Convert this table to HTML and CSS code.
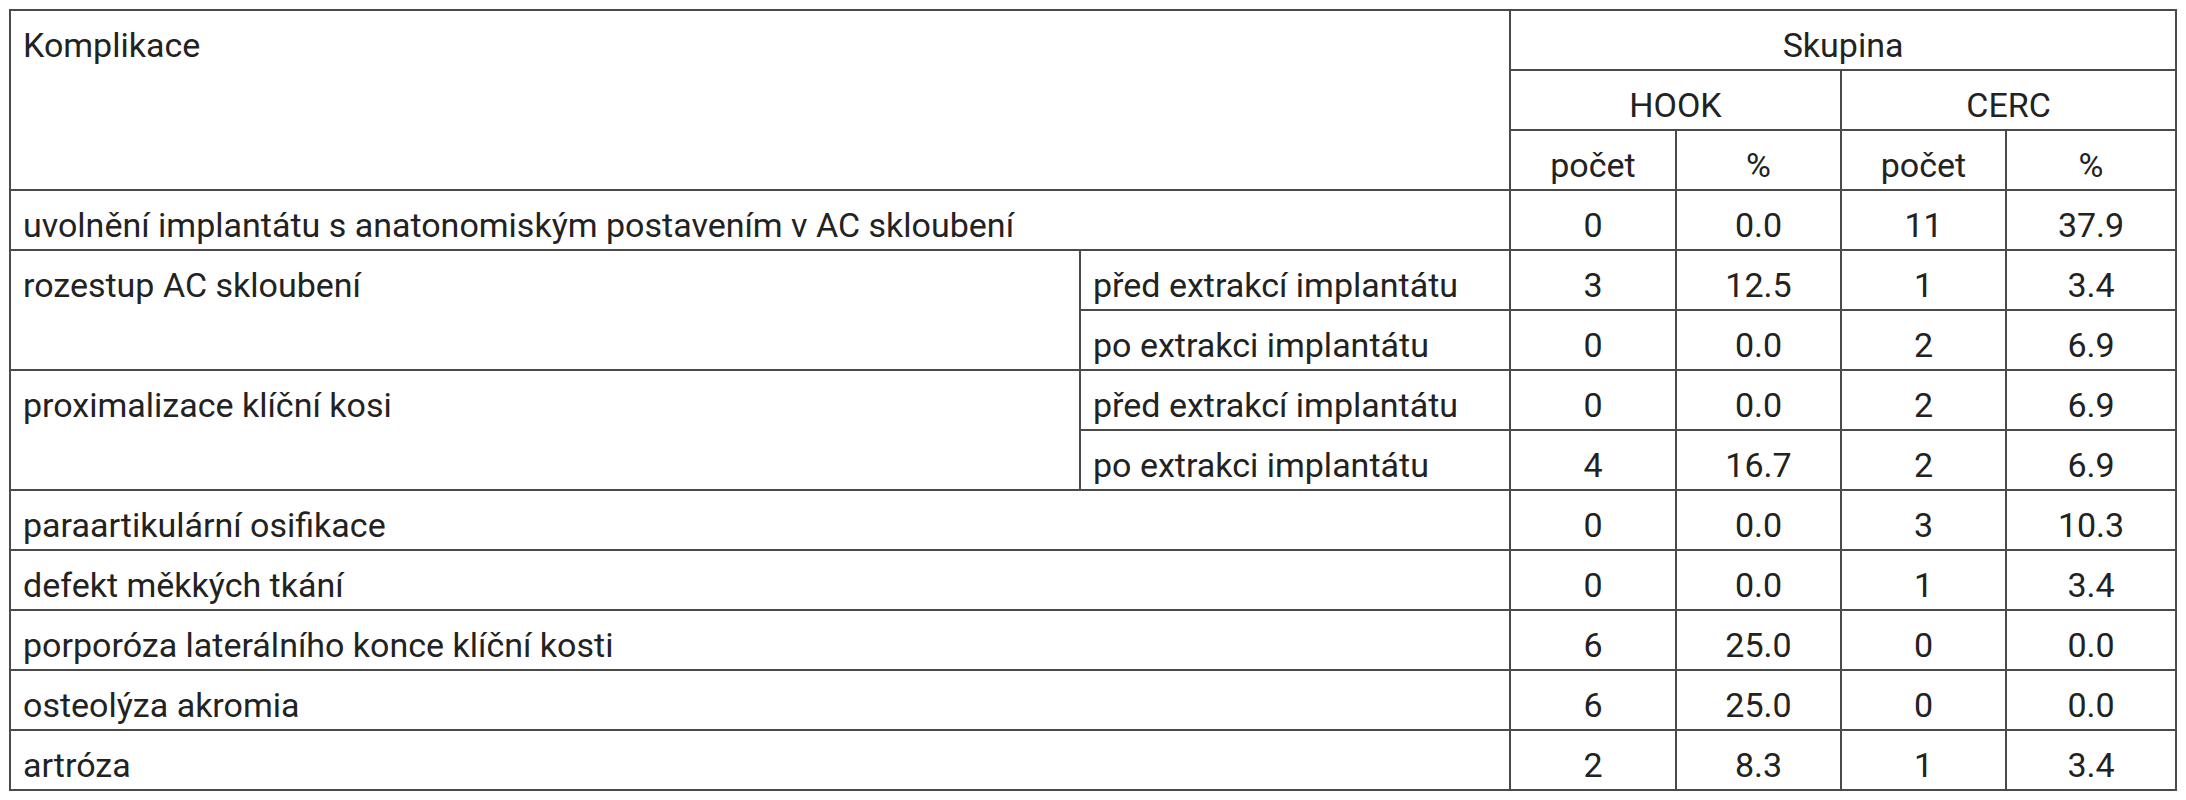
FILE: index.html
```html
<!DOCTYPE html>
<html lang="cs">
<head>
<meta charset="utf-8">
<title>Komplikace</title>
<link rel="stylesheet" href="styles.css">
</head>
<body>
<table class="data">
  <colgroup>
    <col class="c-label">
    <col class="c-sub">
    <col class="c-n1">
    <col class="c-p1">
    <col class="c-n2">
    <col class="c-p2">
  </colgroup>
  <thead>
    <tr class="hr">
      <th class="left top" colspan="2" rowspan="3">Komplikace</th>
      <th colspan="4">Skupina</th>
    </tr>
    <tr class="hr">
      <th colspan="2">HOOK</th>
      <th colspan="2">CERC</th>
    </tr>
    <tr class="hr hr-last">
      <th>počet</th>
      <th>%</th>
      <th>počet</th>
      <th>%</th>
    </tr>
  </thead>
  <tbody>
    <tr>
      <td class="left" colspan="2">uvolnění implantátu s anatonomiským postavením v AC skloubení</td>
      <td>0</td><td>0.0</td><td>11</td><td>37.9</td>
    </tr>
    <tr>
      <td class="left top" rowspan="2">rozestup AC skloubení</td>
      <td class="left">před extrakcí implantátu</td>
      <td>3</td><td>12.5</td><td>1</td><td>3.4</td>
    </tr>
    <tr>
      <td class="left">po extrakci implantátu</td>
      <td>0</td><td>0.0</td><td>2</td><td>6.9</td>
    </tr>
    <tr>
      <td class="left top" rowspan="2">proximalizace klíční kosi</td>
      <td class="left">před extrakcí implantátu</td>
      <td>0</td><td>0.0</td><td>2</td><td>6.9</td>
    </tr>
    <tr>
      <td class="left">po extrakci implantátu</td>
      <td>4</td><td>16.7</td><td>2</td><td>6.9</td>
    </tr>
    <tr>
      <td class="left" colspan="2">paraartikulární osifikace</td>
      <td>0</td><td>0.0</td><td>3</td><td>10.3</td>
    </tr>
    <tr>
      <td class="left" colspan="2">defekt měkkých tkání</td>
      <td>0</td><td>0.0</td><td>1</td><td>3.4</td>
    </tr>
    <tr>
      <td class="left" colspan="2">porporóza laterálního konce klíční kosti</td>
      <td>6</td><td>25.0</td><td>0</td><td>0.0</td>
    </tr>
    <tr>
      <td class="left" colspan="2">osteolýza akromia</td>
      <td>6</td><td>25.0</td><td>0</td><td>0.0</td>
    </tr>
    <tr>
      <td class="left" colspan="2">artróza</td>
      <td>2</td><td>8.3</td><td>1</td><td>3.4</td>
    </tr>
  </tbody>
</table>
</body>
</html>
```

FILE: styles.css
```css
html, body {
  margin: 0;
  padding: 0;
  background: #ffffff;
}
body {
  padding: 9px 0 0 9px;
  font-family: Roboto, "Liberation Sans", sans-serif;
  color: #222222;
}
.data {
  border-collapse: collapse;
  table-layout: fixed;
  width: 2166px;
  font-size: 34px;
}
.c-label { width: 1070px; }
.c-sub { width: 430px; }
.c-n1 { width: 166px; }
.c-p1 { width: 165px; }
.c-n2 { width: 165px; }
.c-p2 { width: 170px; }

.data th,
.data td {
  border: 2px solid #4a4a4a;
  height: 60px;
  padding: 14px 12px 4px 12px;
  line-height: 40px;
  font-weight: 400;
  text-align: center;
  vertical-align: middle;
  box-sizing: border-box;
  white-space: nowrap;
}
.data .hr th {
  height: 59px;
}
.data .hr-last th {
  height: 60px;
}
.data .left {
  text-align: left;
}
.data .top {
  vertical-align: top;
}
```
